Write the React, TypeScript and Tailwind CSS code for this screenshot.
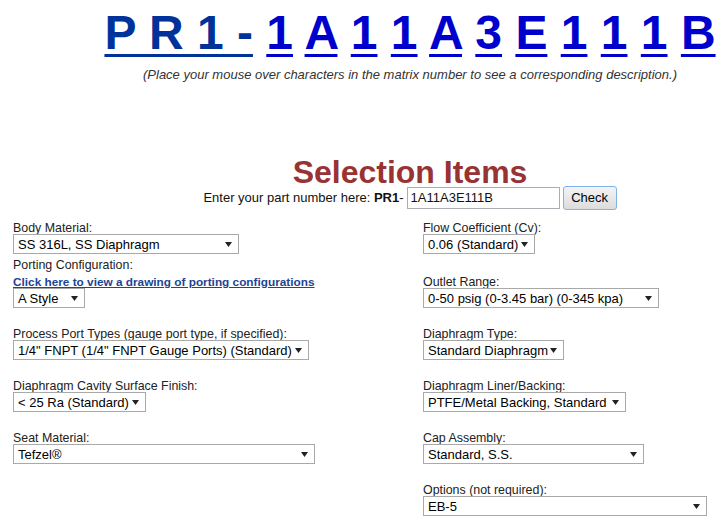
import React from "react";

function Arrow() {
  return (
    <svg width="7" height="5" viewBox="0 0 7 5" className="shrink-0">
      <path d="M0 0 L7 0 L3.5 5 Z" fill="#222" />
    </svg>
  );
}

function Sel({ w, text }: { w: string; text: string }) {
  return (
    <div
      className={`flex items-center justify-between h-[20px] border border-[#a9a9a9] bg-white pl-[4px] pr-[6px] text-[13px] leading-none text-black whitespace-nowrap ${w}`}
    >
      <span>{text}</span>
      <Arrow />
    </div>
  );
}

function Label({ children }: { children: React.ReactNode }) {
  return (
    <div className="h-[17px] flex items-end leading-[12px] text-[12.4px] text-[#222] whitespace-nowrap">
      <span>{children}</span>
    </div>
  );
}

const chars = ["1", "A", "1", "1", "A", "3", "E", "1", "1", "1", "B"];

export default function App() {
  return (
    <div className="w-[717px] h-[520px] overflow-hidden bg-white font-['Liberation_Sans',Arial,sans-serif]">
      <div className="w-[820px]">
        <div className="pt-[5px] text-center text-[48px] font-bold leading-[56px] whitespace-nowrap">
          <a className="text-[#003399] underline decoration-[3px] underline-offset-[5px]">P R 1 -</a>{" "}
          {chars.map((c, i) => (
            <React.Fragment key={i}>
              <a className="text-[#0000cc] underline decoration-[3px] underline-offset-[5px]">{c}</a>
              {i < chars.length - 1 ? " " : ""}
            </React.Fragment>
          ))}
        </div>
        <div className="mt-[7px] text-center text-[13px] italic leading-[14px] text-[#333]">
          (Place your mouse over characters in the matrix number to see a corresponding description.)
        </div>
        <div className="mt-[76px] text-center text-[32px] font-bold leading-[28px] text-[#993333]">
          Selection Items
        </div>
        <div className="h-[24px] flex items-center justify-center gap-[3px] text-[13px] text-[#111]">
          <span>
            Enter your part number here: <b>PR1</b>-
          </span>
          <div className="w-[153px] h-[22px] border border-[#abadb3] bg-white flex items-center pl-[3px] text-[13px]">
            1A11A3E111B
          </div>
          <div className="w-[54px] h-[24px] border border-[#7eb4ea] rounded-[3px] bg-linear-to-b from-[#f4f4f4] to-[#dcdcdc] flex items-center justify-center text-[13px] text-black">
            Check
          </div>
        </div>
        <div className="mt-[7px] grid grid-cols-2">
          <div className="pl-[13px] flex flex-col">
            <Label>Body Material:</Label>
            <Sel w="w-[226px]" text="SS 316L, SS Diaphragm" />
            <Label>Porting Configuration:</Label>
            <div className="h-[17px] flex items-end leading-[12px] text-[11.8px] font-bold whitespace-nowrap">
              <a className="text-[#1c4594] underline">Click here to view a drawing of porting configurations</a>
            </div>
            <Sel w="w-[72px]" text="A Style" />
            <div className="h-[15px]" />
            <Label>Process Port Types (gauge port type, if specified):</Label>
            <Sel w="w-[296px]" text={'1/4" FNPT (1/4" FNPT Gauge Ports) (Standard)'} />
            <div className="h-[15px]" />
            <Label>Diaphragm Cavity Surface Finish:</Label>
            <Sel w="w-[133px]" text="< 25 Ra (Standard)" />
            <div className="h-[15px]" />
            <Label>Seat Material:</Label>
            <Sel w="w-[302px]" text="Tefzel®" />
          </div>
          <div className="pl-[13px] flex flex-col">
            <Label>Flow Coefficient (Cv):</Label>
            <Sel w="w-[112px]" text="0.06 (Standard)" />
            <div className="h-[17px]" />
            <Label>Outlet Range:</Label>
            <Sel w="w-[236px]" text="0-50 psig (0-3.45 bar) (0-345 kpa)" />
            <div className="h-[15px]" />
            <Label>Diaphragm Type:</Label>
            <Sel w="w-[141px]" text="Standard Diaphragm" />
            <div className="h-[15px]" />
            <Label>Diaphragm Liner/Backing:</Label>
            <Sel w="w-[203px]" text="PTFE/Metal Backing, Standard" />
            <div className="h-[15px]" />
            <Label>Cap Assembly:</Label>
            <Sel w="w-[221px]" text="Standard, S.S." />
            <div className="h-[15px]" />
            <Label>Options (not required):</Label>
            <Sel w="w-[284px]" text="EB-5" />
          </div>
        </div>
      </div>
    </div>
  );
}
